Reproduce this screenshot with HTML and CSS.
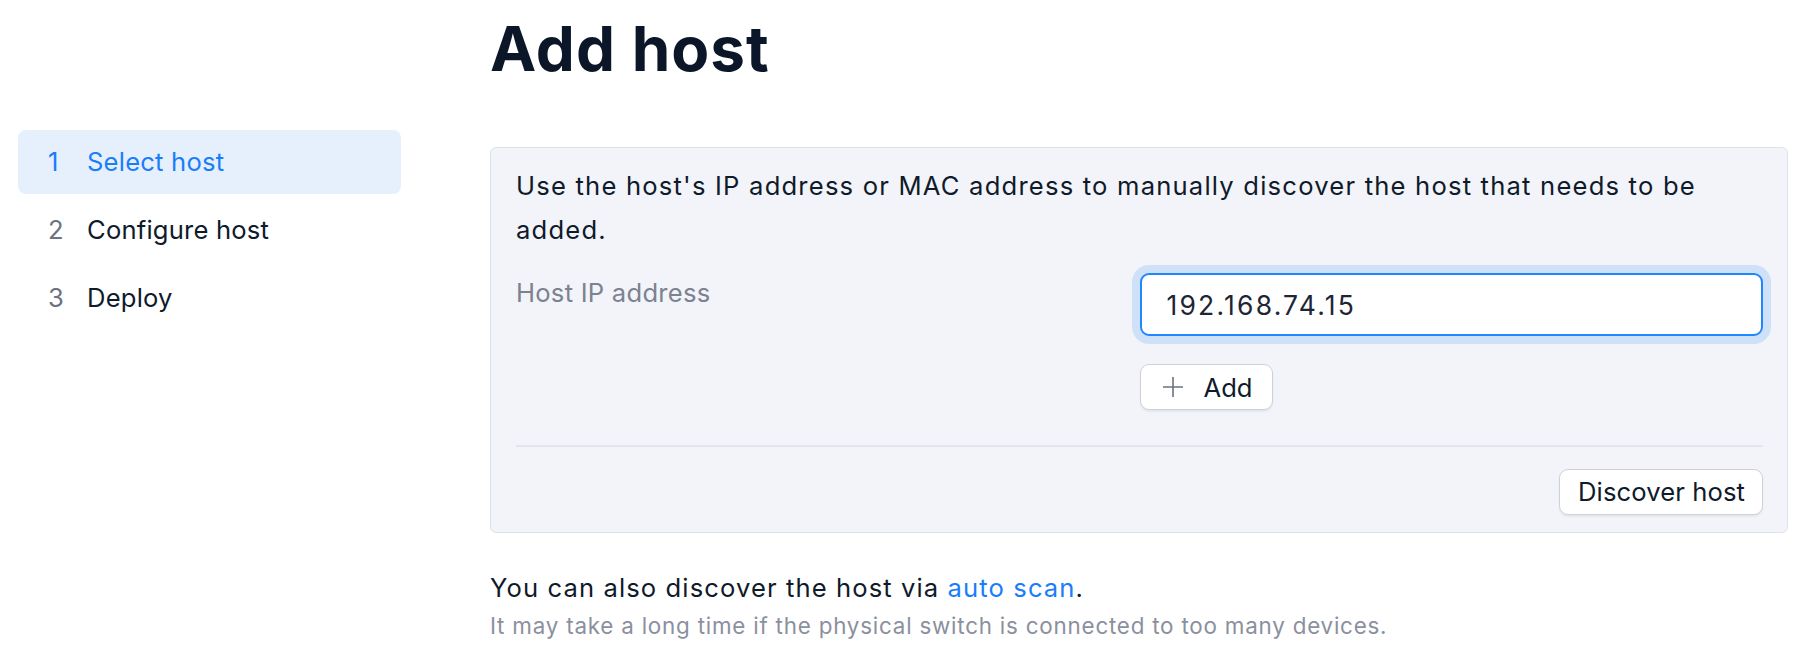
FILE: index.html
```html
<!DOCTYPE html>
<html lang="en">
<head>
<meta charset="utf-8">
<title>Add host</title>
<link rel="stylesheet" href="styles.css">
</head>
<body>
<div class="layout">
  <nav class="steps">
    <div class="step active"><span class="num">1</span><span class="label">Select host</span></div>
    <div class="step"><span class="num">2</span><span class="label">Configure host</span></div>
    <div class="step"><span class="num">3</span><span class="label">Deploy</span></div>
  </nav>
  <main class="main">
    <h1 class="title">Add host</h1>
    <section class="card">
      <p class="desc">Use the host's IP address or MAC address to manually discover the host that needs to be added.</p>
      <div class="form-row">
        <div class="field-label">Host IP address</div>
        <div class="field-control">
          <div class="input">192.168.74.15</div>
          <button class="btn btn-add" type="button">
            <svg class="plus" width="24" height="24" viewBox="0 0 24 24" fill="none" stroke="currentColor" stroke-width="1.6"><path d="M12 2v20M2 12h20"/></svg>
            <span>Add</span>
          </button>
        </div>
      </div>
      <div class="divider"></div>
      <div class="card-footer">
        <button class="btn btn-discover" type="button">Discover host</button>
      </div>
    </section>
    <p class="alt">You can also discover the host via <a class="link" href="#">auto scan</a>.</p>
    <p class="hint">It may take a long time if the physical switch is connected to too many devices.</p>
  </main>
</div>
</body>
</html>
```

FILE: styles.css
```css
* { box-sizing: border-box; }
html, body { margin: 0; padding: 0; background: #ffffff; }
body {
  font-family: Inter, "Noto Sans", "Liberation Sans", sans-serif;
  font-size: 25.6px;
  color: #0f1a2a;
}
.layout {
  display: flex;
  align-items: flex-start;
}
.steps {
  width: 383px;
  margin-left: 18px;
  margin-top: 130px;
  display: flex;
  flex-direction: column;
  gap: 4px;
}
.step {
  height: 64px;
  display: flex;
  align-items: center;
  padding-left: 30px;
  border-radius: 8px;
  line-height: 64px;
  color: #0f1a2a;
  letter-spacing: 0.2px;
}
.step .num {
  width: 39px;
  color: #6b7280;
}
.step.active {
  background: #e6f0fd;
  color: #1a7dfa;
}
.step.active .num { color: #1a7dfa; }
.main {
  margin-left: 89px;
  width: 1298px;
}
.title {
  margin: 12px 0 61px 0;
  font-size: 62px;
  line-height: 74px;
  font-weight: 700;
  color: #0b1628;
  letter-spacing: 1px;
}
.card {
  background: #f2f4f9;
  border: 1.5px solid #dbe2ee;
  border-radius: 6px;
  padding: 16px 24px 17px 25px;
}
.desc {
  margin: 0;
  line-height: 44px;
  color: #0f1a2a;
  letter-spacing: 1.2px;
}
.form-row {
  display: grid;
  grid-template-columns: 1fr 1fr;
  margin-top: 21px;
}
.field-label {
  line-height: 40px;
  color: #7c8290;
  letter-spacing: 0.25px;
}
.field-control {
  display: flex;
  flex-direction: column;
  align-items: flex-start;
  gap: 28px;
}
.input {
  width: 100%;
  height: 63px;
  display: flex;
  align-items: center;
  padding-left: 25px;
  background: #ffffff;
  border: 2px solid #1f87ff;
  border-radius: 9px;
  box-shadow: 0 0 0 8px #cfe1f8;
  color: #1e2535;
  font-size: 26.5px;
  letter-spacing: 2.2px;
}
.btn {
  font: inherit;
  color: #0f1a2a;
  height: 46px;
  padding: 0 17px;
  background: #ffffff;
  border: 1.5px solid #cfd1d6;
  border-radius: 9px;
  box-shadow: 0 2px 2px rgba(15, 26, 42, 0.06);
  display: inline-flex;
  align-items: center;
  cursor: pointer;
}
.btn-add {
  padding: 0 19px 0 20px;
  gap: 19px;
  letter-spacing: 0;
}
.btn-discover {
  padding: 0 17px 0 18px;
  letter-spacing: 0.1px;
}
.plus { color: #6b7280; display: block; }
.divider {
  height: 1.5px;
  background: #e2e6ee;
  margin-top: 35px;
}
.card-footer {
  display: flex;
  justify-content: flex-end;
  margin-top: 22px;
}
.alt {
  margin: 35px 0 0 0;
  line-height: 40px;
  color: #0f1a2a;
  letter-spacing: 1.1px;
}
.link {
  color: #1a7dfa;
  text-decoration: none;
}
.hint {
  margin: 0;
  font-size: 22.4px;
  line-height: 36px;
  color: #8b909e;
  letter-spacing: 0.78px;
}
```
